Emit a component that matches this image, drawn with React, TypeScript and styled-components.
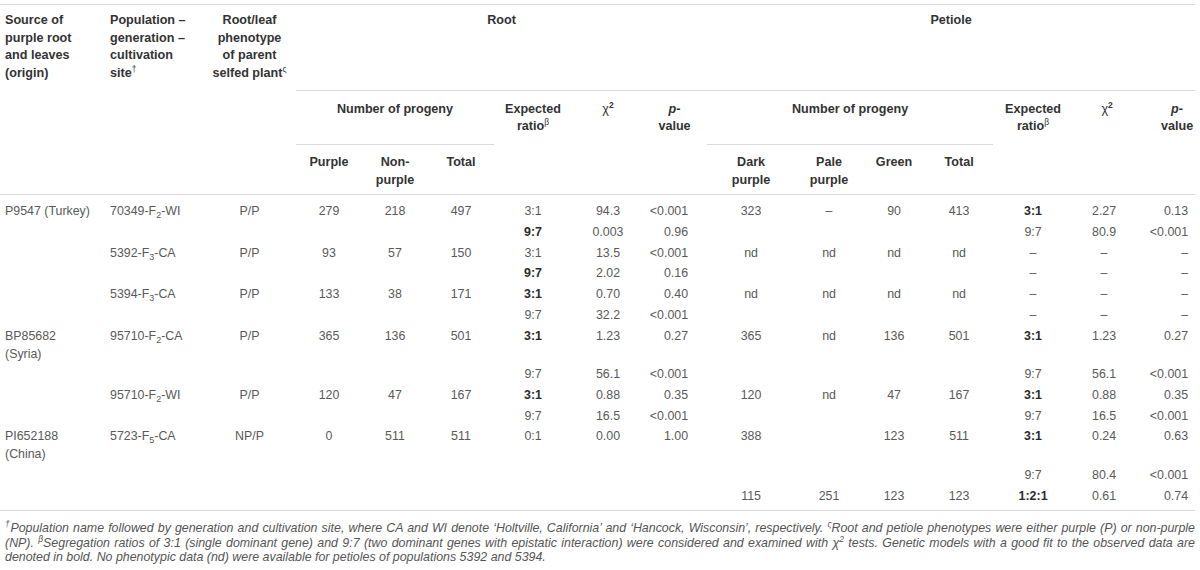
import React from "react";
import styled, { createGlobalStyle } from "styled-components";

const GlobalStyle = createGlobalStyle`
  html, body { margin: 0; padding: 0; background: #fff; }
  body { font-family: "Liberation Sans", Arial, Helvetica, sans-serif; }
`;

const RULE = "#d9d9d9";

const Page = styled.div`
  width: 1195px;
  padding-top: 4px;
`;

const Table = styled.table`
  width: 1195px;
  border-collapse: collapse;
  table-layout: fixed;
  border-top: 1px solid ${RULE};
`;

const Col = styled.col<{ $w: number }>`
  width: ${(p) => p.$w}px;
`;

const Head = styled.thead`
  border-bottom: 1px solid ${RULE};
`;

const Body = styled.tbody`
  border-bottom: 1px solid ${RULE};
`;

const HeadRow = styled.tr<{ $h: number }>`
  height: ${(p) => p.$h}px;
`;

const HeadCell = styled.th<{
  $align?: string;
  $pt?: number;
  $pl?: number;
  $pr?: number;
  $rule?: boolean;
}>`
  font-weight: bold;
  color: #333;
  font-size: 12.6px;
  line-height: 17.5px;
  vertical-align: top;
  text-align: ${(p) => p.$align ?? "center"};
  padding: ${(p) => p.$pt ?? 7}px ${(p) => p.$pr ?? 5}px 0 ${(p) => p.$pl ?? 5}px;
  border-bottom: ${(p) => (p.$rule ? `1px solid ${RULE}` : "none")};
  white-space: nowrap;
`;

const Cell = styled.td<{
  $align: string;
  $pl: number;
  $pr: number;
  $first?: boolean;
  $last?: boolean;
}>`
  color: #595959;
  font-size: 12.4px;
  line-height: 18px;
  vertical-align: top;
  text-align: ${(p) => p.$align};
  padding: ${(p) => (p.$first ? 7.4 : 1.35)}px ${(p) => p.$pr}px
    ${(p) => (p.$last ? 5.7 : 1.35)}px ${(p) => p.$pl}px;
  white-space: nowrap;
`;

const B = styled.b`
  font-weight: bold;
  color: #2b2b2b;
`;

const Sub = styled.sub`
  font-size: 9px;
  line-height: 0;
  vertical-align: -3px;
`;

const Sup = styled.sup<{ $bold?: boolean }>`
  font-size: 8.5px;
  line-height: 0;
  vertical-align: 5px;
  font-weight: ${(p) => (p.$bold ? "bold" : "normal")};
`;

const Chi = styled.span`
  font-weight: normal;
`;

const Footer = styled.div`
  width: 1190px;
  padding: 10px 0 0 5px;
  font-style: italic;
  font-size: 12.4px;
  line-height: 14.3px;
  color: #555;
`;

const FooterLine = styled.div<{ $justify?: boolean }>`
  white-space: nowrap;
  text-align: ${(p) => (p.$justify ? "justify" : "left")};
  text-align-last: ${(p) => (p.$justify ? "justify" : "left")};
  ${(p) => (p.$justify ? "white-space: normal;" : "")}
`;

type ColSpec = { w: number; align: string; pl: number; pr: number };

const cols: ColSpec[] = [
  { w: 105, align: "left", pl: 5, pr: 5 },
  { w: 98, align: "left", pl: 5, pr: 5 },
  { w: 93, align: "center", pl: 5, pr: 5 },
  { w: 66, align: "center", pl: 5, pr: 5 },
  { w: 66, align: "center", pl: 5, pr: 5 },
  { w: 66, align: "center", pl: 5, pr: 5 },
  { w: 80, align: "center", pl: 3, pr: 5 },
  { w: 68, align: "center", pl: 5, pr: 5 },
  { w: 65, align: "right", pl: 5, pr: 19 },
  { w: 88, align: "center", pl: 5, pr: 5 },
  { w: 68, align: "center", pl: 5, pr: 5 },
  { w: 62, align: "center", pl: 5, pr: 5 },
  { w: 68, align: "center", pl: 5, pr: 5 },
  { w: 80, align: "center", pl: 5, pr: 5 },
  { w: 68, align: "center", pl: 2, pr: 8 },
  { w: 54, align: "right", pl: 2, pr: 7 },
];

const pop = (a: string, n: string, b: string) => (
  <>
    {a}
    <Sub>{n}</Sub>
    {b}
  </>
);

const E = null;
const D = "–";

const rows: React.ReactNode[][] = [
  ["P9547 (Turkey)", pop("70349-F", "2", "-WI"), "P/P", "279", "218", "497", "3:1", "94.3", "<0.001", "323", D, "90", "413", <B>3:1</B>, "2.27", "0.13"],
  [E, E, E, E, E, E, <B>9:7</B>, "0.003", "0.96", E, E, E, E, "9:7", "80.9", "<0.001"],
  [E, pop("5392-F", "3", "-CA"), "P/P", "93", "57", "150", "3:1", "13.5", "<0.001", "nd", "nd", "nd", "nd", D, D, D],
  [E, E, E, E, E, E, <B>9:7</B>, "2.02", "0.16", E, E, E, E, D, D, D],
  [E, pop("5394-F", "3", "-CA"), "P/P", "133", "38", "171", <B>3:1</B>, "0.70", "0.40", "nd", "nd", "nd", "nd", D, D, D],
  [E, E, E, E, E, E, "9:7", "32.2", "<0.001", E, E, E, E, D, D, D],
  [<>BP85682<br />(Syria)</>, pop("95710-F", "2", "-CA"), "P/P", "365", "136", "501", <B>3:1</B>, "1.23", "0.27", "365", "nd", "136", "501", <B>3:1</B>, "1.23", "0.27"],
  [E, E, E, E, E, E, "9:7", "56.1", "<0.001", E, E, E, E, "9:7", "56.1", "<0.001"],
  [E, pop("95710-F", "2", "-WI"), "P/P", "120", "47", "167", <B>3:1</B>, "0.88", "0.35", "120", "nd", "47", "167", <B>3:1</B>, "0.88", "0.35"],
  [E, E, E, E, E, E, "9:7", "16.5", "<0.001", E, E, E, E, "9:7", "16.5", "<0.001"],
  [<>PI652188<br />(China)</>, pop("5723-F", "5", "-CA"), "NP/P", "0", "511", "511", "0:1", "0.00", "1.00", "388", E, "123", "511", <B>3:1</B>, "0.24", "0.63"],
  [E, E, E, E, E, E, E, E, E, E, E, E, E, "9:7", "80.4", "<0.001"],
  [E, E, E, E, E, E, E, E, E, "115", "251", "123", "123", <B>1:2:1</B>, "0.61", "0.74"],
];

const ChiHead = () => (
  <>
    <Chi>χ</Chi>
    <Sup $bold>2</Sup>
  </>
);

export default function App() {
  return (
    <Page>
      <GlobalStyle />
      <Table>
        <colgroup>
          {cols.map((c, i) => (
            <Col key={i} $w={c.w} />
          ))}
        </colgroup>
        <Head>
          <HeadRow $h={86}>
            <HeadCell rowSpan={3} $align="left">
              Source of<br />purple root<br />and leaves<br />(origin)
            </HeadCell>
            <HeadCell rowSpan={3} $align="left">
              Population –<br />generation –<br />cultivation<br />site<Sup>†</Sup>
            </HeadCell>
            <HeadCell rowSpan={3}>
              Root/leaf<br />phenotype<br />of parent<br />selfed plant<Sup>ς</Sup>
            </HeadCell>
            <HeadCell colSpan={6} $rule>
              Root
            </HeadCell>
            <HeadCell colSpan={7} $rule>
              Petiole
            </HeadCell>
          </HeadRow>
          <HeadRow $h={54}>
            <HeadCell colSpan={3} $rule $pt={9.5}>
              Number of progeny
            </HeadCell>
            <HeadCell rowSpan={2} $pt={9.5} $pl={3}>
              Expected<br />ratio<Sup>β</Sup>
            </HeadCell>
            <HeadCell rowSpan={2} $pt={9.5}>
              <ChiHead />
            </HeadCell>
            <HeadCell rowSpan={2} $pt={9.5}>
              <i>p</i>-<br />value
            </HeadCell>
            <HeadCell colSpan={4} $rule $pt={9.5}>
              Number of progeny
            </HeadCell>
            <HeadCell rowSpan={2} $pt={9.5}>
              Expected<br />ratio<Sup>β</Sup>
            </HeadCell>
            <HeadCell rowSpan={2} $pt={9.5}>
              <ChiHead />
            </HeadCell>
            <HeadCell rowSpan={2} $pt={9.5} $pl={19} $pr={1}>
              <i>p</i>-<br />value
            </HeadCell>
          </HeadRow>
          <HeadRow $h={50}>
            <HeadCell $pt={9}>Purple</HeadCell>
            <HeadCell $pt={9}>Non-<br />purple</HeadCell>
            <HeadCell $pt={9}>Total</HeadCell>
            <HeadCell $pt={9}>Dark<br />purple</HeadCell>
            <HeadCell $pt={9}>Pale<br />purple</HeadCell>
            <HeadCell $pt={9}>Green</HeadCell>
            <HeadCell $pt={9}>Total</HeadCell>
          </HeadRow>
        </Head>
        <Body>
          {rows.map((r, ri) => (
            <tr key={ri}>
              {r.map((v, ci) => (
                <Cell
                  key={ci}
                  $align={cols[ci].align}
                  $pl={cols[ci].pl}
                  $pr={cols[ci].pr}
                  $first={ri === 0}
                  $last={ri === rows.length - 1}
                >
                  {v}
                </Cell>
              ))}
            </tr>
          ))}
        </Body>
      </Table>
      <Footer>
        <FooterLine $justify>
          <Sup>†</Sup>Population name followed by generation and cultivation site, where CA and WI denote ‘Holtville, California’ and ‘Hancock, Wisconsin’, respectively. <Sup>ς</Sup>Root and petiole phenotypes were either purple (P) or non-purple
        </FooterLine>
        <FooterLine $justify>
          (NP). <Sup>β</Sup>Segregation ratios of 3:1 (single dominant gene) and 9:7 (two dominant genes with epistatic interaction) were considered and examined with χ<Sup>2</Sup> tests. Genetic models with a good fit to the observed data are
        </FooterLine>
        <FooterLine>
          denoted in bold. No phenotypic data (nd) were available for petioles of populations 5392 and 5394.
        </FooterLine>
      </Footer>
    </Page>
  );
}
